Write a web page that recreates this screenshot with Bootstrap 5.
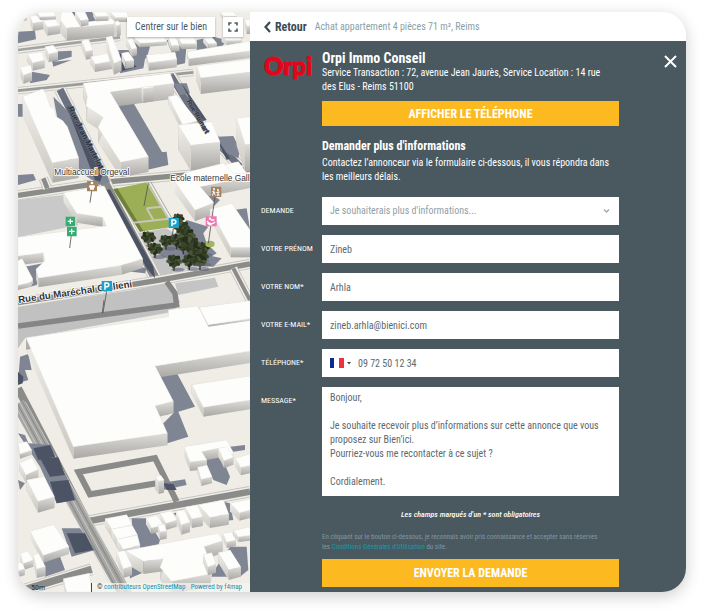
<!DOCTYPE html>
<html lang="fr">
<head>
<meta charset="utf-8">
<meta name="viewport" content="width=device-width, initial-scale=1">
<title>Orpi Immo Conseil</title>
<link href="https://cdn.jsdelivr.net/npm/bootstrap@5.3.0/dist/css/bootstrap.min.css" rel="stylesheet">
<style>
  :root { --slate: #49595f; --amber: #fcba20; }
  body { font-family: "Roboto Condensed", "Liberation Sans Narrow", Roboto, sans-serif; font-size: 10px; line-height: 14px; color: var(--slate); background: #fff; padding: 12px 18px 24px; }
  .shell { display: grid; grid-template-columns: 34.73% minmax(0, 1fr); border-radius: 24px; overflow: hidden; box-shadow: 0 4px 16px rgba(0,0,0,.2); }
  .map-pane { background: #efede6; min-height: 580px; }
  .map-pane > svg { position: absolute; inset: 0; width: 100%; height: 100%; }
  .map-tools { position: absolute; top: 5px; right: 7px; }
  .map-tools .btn { height: 20px; background: #fff; color: var(--slate); font-size: 10px; line-height: 14px; border: 0; border-radius: 0; padding: 0 8px; box-shadow: 0 1px 2px rgba(0,0,0,.3); }
  .map-tools .btn-full { padding: 0 5px; }
  .map-foot { position: absolute; left: 0; right: 0; bottom: 0; font-size: 7px; line-height: 9px; color: #333; }
  .map-foot .credits { background: rgba(245,245,242,.75); padding: 0 8px 0 5px; }
  .map-foot a { color: #1193b5; text-decoration: none; }
  .map-foot .scale-bar { width: 74px; border-right: 1px solid #444; padding-left: 13px; font-size: 8px; }
  .topline { height: 29px; padding: 0 14px; }
  .back { font-size: 12px; font-weight: 700; color: #3d4b51; }
  .crumb { color: #8ba0a6; }
  .panel { background: var(--slate); color: #fff; padding: 9px 67px 5px 11px; }
  .split { display: grid; grid-template-columns: 61px minmax(0, 1fr); }
  .brand { font: 900 24px/32px Lato, sans-serif; color: #e2061a; margin-left: 3px; -webkit-text-stroke: 1px #e2061a; }
  .agency h1, .agency h2 { font-size: 14px; line-height: 16px; font-weight: 700; margin: 0; }
  .agency h2 { font-size: 12px; margin-bottom: 2px; }
  .agency p { margin: 0; }
  .btn-amber { background: var(--amber); color: #fff; border: 0; border-radius: 0; width: 100%; font-size: 12px; line-height: 16px; font-weight: 700; padding: 0; }
  .btn-phone { height: 25px; margin: 7px 0 12px; }
  .btn-send { height: 28px; }
  .lead-form { display: grid; gap: 10px; margin-top: 13px; }
  .lead-form label { font-size: 8px; line-height: 28px; }
  .field, .lead-form .form-control, .lead-form .form-select { border: 0; border-radius: 0; height: 28px; min-height: 28px; padding: 0 8px; font-size: 10px; line-height: 14px; color: #5c6a6f; background-color: #fff; }
  .lead-form .form-select { color: #8fa1a6; background-image: none; }
  .lead-form textarea.form-control { height: 109px; padding: 4px 8px; resize: none; overflow: hidden; }
  .arrow-down { position: absolute; right: 9px; top: 11px; pointer-events: none; }
  .country { border: 0; background: none; padding: 0; }
  .required-note { font-size: 8px; line-height: 10px; font-weight: 500; font-style: italic; margin: 14px 0 12px; }
  .legal { font-size: 7px; line-height: 10px; color: #8395a4; margin: 0 0 7px; }
  .legal a { color: #1b98a8; text-decoration: none; }
  .close-form { position: absolute; right: 9px; top: 14px; border: 0; background: none; padding: 0; line-height: 1; }
</style>
</head>
<body>
<main class="shell">
  <section class="map-pane position-relative" aria-label="Carte">
    <svg id="city" viewBox="54 36 696 1740" preserveAspectRatio="xMinYMin slice" aria-hidden="true">
      <defs>
        <linearGradient id="wallA" x1="0" y1="0" x2="0" y2="1"><stop offset="0" stop-color="#dddcd8"/><stop offset="1" stop-color="#a9a8a5"/></linearGradient>
        <linearGradient id="wallB" x1="0" y1="0" x2="0" y2="1"><stop offset="0" stop-color="#f0eee9"/><stop offset="1" stop-color="#cbc8c1"/></linearGradient>
      </defs>
      <g id="ground"></g>
      <g id="blocks"></g>
      <g id="trees"></g>
      <g font-family="Liberation Sans, sans-serif" fill="#333" stroke="#fff" stroke-width="5" paint-order="stroke" stroke-linejoin="round">
        <text x="163" y="525" font-size="25">Multiaccueil Orgeval</text>
        <text x="511" y="542" font-size="25">Ecole maternelle Gall</text>
        <text transform="translate(56,909) rotate(-8)" font-size="29" font-weight="700">Rue du Maréchal Gallieni</text>
        <text transform="translate(203,325) rotate(63)" font-size="24" font-weight="700" fill="#2c303b" stroke="#767b88" stroke-width="3">Rue Jean Martelot</text>
        <text transform="translate(560,304) rotate(60)" font-size="20" font-weight="700" fill="#2c303b" stroke="#767b88" stroke-width="3">Rue Ruinart</text>
      </g>
      <g id="pins">
        <path d="M275 573L270 608M445 550L432 618M520 685L515 720M214 705L209 744M320 874L309 938M645 590L625 730" stroke="#555" stroke-width="2.5"/>
        <g fill="#1ba1c8"><path d="M506 654h31v30h-31zM305 843h31v31h-31z"/></g>
        <g fill="none" stroke="#fff" stroke-width="4.5"><path d="M516 679v-19h6a5.500 5.500 0 0 1 0 11h-6M315 869v-20h6a5.500 5.500 0 0 1 0 11h-6"/></g>
        <g fill="#34ad70"><path d="M197 650h28v28h-28zM201 680h29v29h-29z"/></g>
        <path d="M211 656v16M203 664h16M215 686v17M207 694h17" stroke="#fff" stroke-width="4"/>
        <g fill="#a5825f"><path d="M261 543h30v31h-30zM633 560h31v31h-31z"/></g>
        <g fill="#fff"><circle cx="276" cy="549" r="4"/><path d="M268 556h16l1 6-3 1v6h-12v-6l-3-1z"/><circle cx="642" cy="567" r="3"/><circle cx="654" cy="570" r="3"/></g>
        <path d="M642 571l-2 8-3 8M641 578l5 8M637 574l9 4M654 574v8l-3 6M654 582l4 6M649 578l10-2" stroke="#fff" stroke-width="3" fill="none"/>
        <path d="M617 649h33v30h-33z" fill="#f178b5"/><path d="M621 663q7 11 18 7l6-4M622 668q6 8 13 7M633 660h10" stroke="#fff" stroke-width="4" fill="none"/><circle cx="630" cy="656" r="3.500" fill="#fff"/>
      </g>
    </svg>
    <div class="map-tools d-flex gap-2">
      <button class="btn" type="button">Centrer sur le bien</button>
      <button class="btn btn-full d-flex align-items-center" type="button" aria-label="Plein écran">
        <svg width="10" height="10" viewBox="0 0 10 10" fill="none" stroke="#49595f" stroke-width="1.600"><path d="M1 3.500V1h2.500M6.500 1H9v2.500M9 6.500V9H6.500M3.500 9H1V6.500"/></svg>
      </button>
    </div>
    <div class="map-foot d-flex">
      <span class="scale-bar">50m</span>
      <div class="credits d-flex flex-fill justify-content-between"><span>© <a href="#">contributeurs OpenStreetMap</a></span><a href="#">Powered by f4map</a></div>
    </div>
  </section>

  <div class="d-flex flex-column">
    <header class="topline d-flex align-items-center bg-white">
      <a class="back d-flex align-items-center text-decoration-none" href="#"><svg class="me-1" width="7" height="12" viewBox="0 0 7 12" fill="none" stroke="#3d4b51" stroke-width="2.200"><path d="M6 1L1.500 6L6 11"/></svg>Retour</a>
      <span class="crumb ms-2">Achat appartement 4 pièces 71 m², Reims</span>
    </header>
    <div class="panel position-relative flex-fill">
      <button class="close-form" type="button" aria-label="Fermer"><svg width="13" height="13" viewBox="0 0 13 13" stroke="#fff" stroke-width="2"><path d="M1 1L12 12M12 1L1 12"/></svg></button>
      <div class="split">
        <div class="brand">Orpi</div>
        <div class="agency">
          <h1>Orpi Immo Conseil</h1>
          <p>Service Transaction : 72, avenue Jean Jaurès, Service Location : 14 rue<br>des Elus - Reims 51100</p>
          <button class="btn btn-amber btn-phone d-block" type="button">AFFICHER LE TÉLÉPHONE</button>
          <h2>Demander plus d'informations</h2>
          <p>Contactez l’annonceur via le formulaire ci-dessous, il vous répondra dans<br>les meilleurs délais.</p>
        </div>
      </div>
      <form>
        <div class="lead-form">
          <div class="split"><label for="ask">DEMANDE</label>
            <div class="position-relative"><select class="form-select" id="ask"><option>Je souhaiterais plus d'informations...</option></select>
            <svg class="arrow-down" width="7" height="6" viewBox="0 0 7 6" fill="none" stroke="#9aabaf" stroke-width="1.300"><path d="M1 1.500L3.500 4L6 1.500"/></svg></div></div>
          <div class="split"><label for="first">VOTRE PRÉNOM</label><input class="form-control" id="first" value="Zineb"></div>
          <div class="split"><label for="last">VOTRE NOM*</label><input class="form-control" id="last" value="Arhla"></div>
          <div class="split"><label for="mail">VOTRE E-MAIL*</label><input class="form-control" id="mail" type="email" value="zineb.arhla@bienici.com"></div>
          <div class="split"><label for="tel">TÉLÉPHONE*</label>
            <div class="field d-flex align-items-center">
              <button class="country d-flex align-items-center" type="button" aria-label="France"><svg width="24" height="10" viewBox="0 0 24 10"><path fill="#0b2a92" d="M0 0h4v10H0z"/><path fill="#fff" d="M4 0h5v10H4z"/><path fill="#f0303f" d="M9 0h5v10H9z"/><path fill="#444" d="M17 4h4l-2 2.500z"/></svg></button>
              <input class="form-control px-1" id="tel" type="tel" value="09 72 50 12 34">
            </div></div>
          <div class="split"><label for="msg">MESSAGE*</label><textarea class="form-control" id="msg">Bonjour,

Je souhaite recevoir plus d’informations sur cette annonce que vous proposez sur Bien’ici.
Pourriez-vous me recontacter à ce sujet ?

Cordialement.</textarea></div>
        </div>
        <div class="split">
          <span></span>
          <div>
            <p class="required-note text-center">Les champs marqués d'un * sont obligatoires</p>
            <p class="legal">En cliquant sur le bouton ci-dessous, je reconnais avoir pris connaissance et accepter sans réserves<br>les <a href="#">Conditions Générales d'Utilisation</a> du site.</p>
            <button class="btn btn-amber btn-send d-block" type="submit">ENVOYER LA DEMANDE</button>
          </div>
        </div>
      </form>
    </div>
  </div>
</main>
<script src="https://cdn.jsdelivr.net/npm/bootstrap@5.3.0/dist/js/bootstrap.bundle.min.js"></script>
<script>
  const NS = 'http://www.w3.org/2000/svg';
  const add = (parent, tag, attrs) => {
    const el = document.createElementNS(NS, tag);
    for (const k in attrs) el.setAttribute(k, attrs[k]);
    document.getElementById(parent).appendChild(el);
  };
  const area = (pts, fill) => add('ground', 'polygon', { points: pts, fill });
  const road = (d, width, stroke = '#8b8b8a') => {
    add('ground', 'path', { d, fill: 'none', stroke: '#c4c3be', 'stroke-width': width + 14, 'stroke-linejoin': 'round' });
    add('ground', 'path', { d, fill: 'none', stroke: '#efede6', 'stroke-width': width + 9 });
    add('ground', 'path', { d, fill: 'none', stroke, 'stroke-width': width });
  };
  const line = (d, width, stroke) => add('ground', 'path', { d, fill: 'none', stroke, 'stroke-width': width });
  const SH = '#7f8593', DK = '#4c5364';

  // Each block is a roof outline whose edges are extruded downwards by its height
  const block = (str, h) => {
    const p = str.split(' ').map(s => s.split(',').map(Number));
    p.forEach((a, i) => {
      const b = p[(i + 1) % p.length];
      const slope = Math.abs((b[1] - a[1]) / ((b[0] - a[0]) || 0.01));
      add('blocks', 'polygon', {
        points: `${a} ${b} ${b[0]},${b[1] + h} ${a[0]},${a[1] + h}`,
        fill: slope > 0.5 ? 'url(#wallB)' : 'url(#wallA)'
      });
    });
    add('blocks', 'polygon', { points: str, fill: '#fdfdfb', stroke: '#e3e2de', 'stroke-width': 1 });
  };

  // Car parks and lawns
  area('54,600 190,585 215,640 235,675 54,712', '#c9c9c9');
  area('54,920 400,870 495,850 540,905 520,935 75,1015 54,1045', '#c1c1c1');
  area('525,850 645,833 655,860 535,885', '#c4c4c4');
  area('410,700 500,685 610,760 590,800 470,830 440,770', '#c4c4c4');

  // Streets
  road('M54,150L210,130L360,112', 8, '#a2a3a3');
  road('M54,272L580,217', 8, '#9a9b9b');
  road('M180,268L320,548', 22, '#6c7180');
  road('M512,226L610,385L720,500', 20, '#6c7180');
  road('M54,586L330,545L750,508', 16);
  road('M310,540L470,842', 26);
  road('M54,908L470,842L750,792', 16);
  road('M700,805L760,920', 12);
  road('M130,535L142,565', 14);
  line('M54,978L530,915L525,880L500,845', 16, '#858585');
  line('M54,1165L262,1565', 24, '#8b8b8a');
  road('M255,1565L750,1475', 20);
  road('M54,1775L275,1708', 22);
  line('M54,1210L380,1790', 40, '#a5a5a4');
  for (let i = 0; i < 5; i++) line(`M${40 + i * 9},1205L${350 + i * 12},1790`, 2, i % 2 ? '#777' : '#dddcd8');
  line('M265,1575L375,1776', 3, '#9a9a98');
  line('M530,1505L465,1374L235,1416L270,1483L470,1450', 18, '#8a8a89');
  line('M312,900L307,940', 2.5, '#555');

  // Park
  area('340,568 445,546 520,680 420,695', '#9cae56');
  area('340,568 352,565 430,693 420,695', '#6f7f3c');
  line('M400,668L520,655M440,625L485,620M440,625L460,660M440,545L520,680', 6, '#c6c6ba');
  line('M452,545L530,680', 3, '#a7a89e');

  // Cast shadows
  [
    '54,95 105,92 108,118 54,130', '150,155 215,152 215,170 160,185 215,180 160,200', '95,215 150,225 140,240 90,250',
    '205,36 275,36 300,60 290,100 205,85', '355,150 440,150 430,205 360,220', '400,110 450,140 440,175 400,180',
    '330,276 520,250 520,290 400,308 500,480 470,500 430,470', '160,290 200,330 300,480 330,545 300,555 215,500 180,400',
    '520,250 560,250 570,280 540,285', '650,410 700,408 720,450 715,475 660,450', '590,120 640,110 680,120 660,150 590,160',
    '500,120 560,130 555,190 530,195', '54,312 70,312 75,350 54,350', '440,460 500,455 505,495 440,510',
    '54,525 100,522 108,540 54,555', '560,660 625,680 610,700 620,730 650,760 600,790 530,790 470,760 500,730',
    '600,760 665,775 640,800 590,795', '600,560 660,600 640,620', '700,630 740,625 750,690', '75,800 130,790 110,855 90,860', '360,785 440,805 435,820 365,812',
    '60,1070 85,1062 95,1110 75,1110 85,1140 54,1150', '465,1098 530,1118 585,1220 535,1235 565,1310 495,1332 480,1280 520,1240',
    '54,1300 75,1305 85,1330 155,1335 165,1370 200,1430 230,1500 170,1510 120,1400', '54,1440 75,1450 60,1470',
    '185,1585 240,1585 285,1650 215,1670', '130,1680 180,1670 195,1710 135,1730',
    '480,1450 555,1438 560,1455 490,1470', '605,1355 660,1358 690,1430 680,1455 640,1440', '690,1340 735,1335 735,1350 700,1355',
    '395,1555 440,1555 480,1620 470,1650 400,1640', '520,1540 540,1535 550,1570', '670,1505 690,1510 700,1560 650,1565',
    '615,1640 660,1640 650,1660', '690,1640 740,1640 745,1710 720,1730 630,1730', '380,1650 460,1680 470,1700 390,1735'
  ].forEach(p => area(p, SH));
  [
    '200,320 215,318 310,520 300,545 285,540', '315,570 330,568 460,800 465,835 440,805', '360,160 410,200 360,215',
    '335,280 420,290 415,300 350,300', '465,1098 530,1118 485,1125', '466,1218 515,1232 500,1245',
    '54,1115 70,1130 68,1150 54,1155', '100,1345 150,1335 165,1370 115,1380', '120,1375 175,1372 195,1425 150,1430',
    '150,1445 205,1440 225,1500 170,1510', '200,1600 255,1600 280,1650 225,1660', '650,415 690,475 680,480', '545,250 620,360 600,365',
    '490,1450 520,1452 530,1470 500,1470'
  ].forEach(p => area(p, DK));

  // Buildings, north to south
  [
    ['54,36 75,36 80,46 54,52', 15], ['90,48 118,46 130,64 98,70', 24], ['130,62 165,58 180,76 142,82', 25],
    ['110,36 160,36 168,48 120,50', 10], ['185,36 215,36 235,66 255,72 262,66 340,56 343,72 200,84 180,60', 38],
    ['225,36 255,36 265,58 242,62', 18], ['280,36 320,36 325,48 288,50', 14], ['330,36 380,36 385,52 345,52', 14],
    ['343,66 354,62 362,72 350,78', 34], ['400,112 490,106 500,124 420,130', 12], ['505,112 525,110 538,135 515,138', 18],
    ['535,112 580,110 590,130 545,132', 16], ['610,112 635,110 650,130 625,132', 16], ['665,112 720,104 725,120 680,122', 14],
    ['660,36 700,36 710,48 670,48', 12], ['735,60 750,58 750,78 740,78', 24],
    ['135,140 160,136 174,155 146,163', 24], ['82,162 125,156 134,180 98,188', 24], ['60,202 92,195 96,216 70,226', 26],
    ['245,122 266,118 278,150 258,154', 25], ['380,118 398,116 410,144 396,148', 22], ['365,160 385,156 402,180 376,185', 22],
    ['272,170 322,160 340,182 285,192', 24], ['318,112 336,108 364,180 342,190', 34],
    ['440,165 525,157 530,178 446,188', 24], ['562,155 750,124 750,152 566,176', 22], ['590,198 750,178 750,216 602,234', 48],
    ['68,290 128,267 138,282 150,320 162,326 168,350 188,362 202,380 236,474 157,488', 60],
    ['250,250 510,220 522,250 330,276 445,470 362,486 294,382 310,352 258,318 262,290', 46],
    ['425,262 460,258 460,262 430,266', 42], ['505,290 530,285 592,362 548,374', 24],
    ['535,375 635,365 660,426 572,436', 76], ['710,355 750,350 750,432 735,434', 82],
    ['670,495 715,485 740,520 700,530', 18], ['525,546 555,518 670,490 700,520 750,520 750,530 600,560 642,608 585,630', 34],
    ['630,628 695,610 750,690 750,742 692,742', 30],
    ['190,578 312,558 428,776 365,796 115,834 108,808 135,782 130,758 54,768 54,712 240,688 320,678 308,652 230,640', 28],
    ['54,782 66,776 98,836 94,846 54,856', 14],
    ['505,930 590,918 608,940 625,974 750,960 750,1053 465,1098 520,1204 465,1217 502,1300 220,1340 78,1013 505,950', 36],
    ['598,922 750,902 750,956 625,974', 6], ['575,1154 750,1128 750,1200 610,1222', 28],
    ['552,1340 680,1320 700,1360 680,1375 655,1345 605,1355 620,1380 570,1385', 28],
    ['54,1330 80,1325 95,1350 60,1362', 14], ['58,1390 95,1373 115,1408 78,1424', 26], ['80,1440 132,1430 163,1490 114,1504', 34],
    ['593,1402 620,1396 636,1430 604,1438', 20], ['655,1345 680,1340 700,1372 672,1382', 22], ['705,1375 750,1362 750,1396 722,1402', 24],
    ['466,1430 482,1426 492,1440 476,1444', 38], ['690,1510 750,1498 750,1530 718,1538', 24],
    ['595,1515 670,1500 686,1542 630,1552', 32], ['555,1522 592,1515 608,1550 576,1556', 28], ['528,1534 553,1530 570,1566 544,1574', 30],
    ['480,1540 514,1533 530,1560 498,1570', 20], ['438,1555 470,1546 490,1574 454,1584', 18], ['474,1575 492,1572 500,1592 480,1596', 24],
    ['315,1556 380,1544 396,1574 336,1588', 26], ['334,1588 396,1576 412,1604 352,1618', 26], ['350,1618 412,1606 420,1636 370,1648', 26],
    ['90,1594 160,1574 207,1640 130,1666', 22], ['60,1660 84,1654 100,1680 70,1690', 20], ['100,1665 115,1660 136,1700 110,1706', 28],
    ['54,1690 66,1688 74,1706 54,1712', 20], ['668,1600 695,1596 708,1620 680,1626', 18], ['700,1592 750,1580 750,1606 715,1610', 16],
    ['375,1652 655,1600 668,1622 612,1640 635,1695 630,1722 515,1744 480,1702 490,1676 430,1684', 38],
    ['350,1656 374,1652 396,1698 370,1706', 28], ['610,1664 635,1658 648,1692 624,1700', 26],
    ['655,1658 690,1650 722,1700 686,1710', 30], ['190,1736 268,1720 275,1776 200,1776', 20]
  ].forEach(b => block(...b));

  // Trees as overlapping leaf clumps
  [[445,712,19],[465,746,19],[498,722,18],[535,655,15],[545,682,21],[530,720,19],[560,705,22],[550,740,14],[572,732,24],[590,750,26],
   [522,783,20],[608,742,17],[602,768,20],[568,782,19],[600,785,16],[585,768,20]].forEach(([x, y, r], i) => {
    add('trees', 'ellipse', { cx: x + 12, cy: y + r + 6, rx: r, ry: 6, fill: '#5d6474', opacity: .6 });
    add('trees', 'path', { d: `M${x},${y}v${r + 9}`, stroke: '#3c3226', 'stroke-width': 4 });
    for (let k = 0; k < 22; k++) {
      const a = k * 2.4, d = r * Math.sqrt(k / 22);
      add('trees', 'circle', { cx: x + d * Math.cos(a), cy: y + d * Math.sin(a) * .85, r: r * .28, fill: ['#252f1b', '#38452a', '#2e3a20', '#4a5637'][(k + i) % 4] });
    }
  });
  add('trees', 'ellipse', { cx: 630, cy: 732, rx: 14, ry: 10, fill: '#a3b45d' });
</script>
</body>
</html>
